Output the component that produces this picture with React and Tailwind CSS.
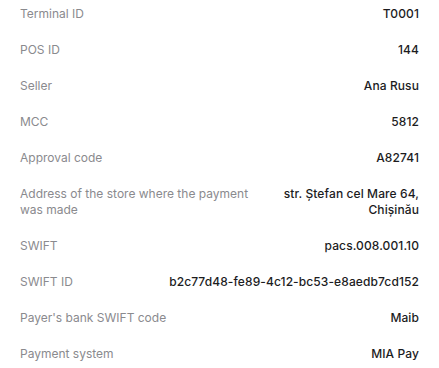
export default function App() {
  const rows = [
    ["Terminal ID", "T0001"],
    ["POS ID", "144"],
    ["Seller", "Ana Rusu"],
    ["MCC", "5812"],
    ["Approval code", "A82741"],
    ["Address of the store where the payment was made", "str. Ștefan cel Mare 64, Chișinău", true],
    ["SWIFT", "pacs.008.001.10"],
    ["SWIFT ID", "b2c77d48-fe89-4c12-bc53-e8aedb7cd152"],
    ["Payer's bank SWIFT code", "Maib"],
    ["Payment system", "MIA Pay"],
  ];
  return (
    <div className="w-[439px] h-[368px] bg-white overflow-hidden px-5 pt-[6px] flex flex-col gap-5 text-[12px] leading-4" style={{ fontFamily: "Inter, 'Noto Sans', sans-serif" }}>
      {rows.map(([l, v, wrap]) => (
        <div key={l} className="flex justify-between items-start gap-6">
          <div className="text-[#8a8a8e] min-w-0 flex-1">{l}</div>
          {wrap ? (
            <div className="text-[#1c1c1e] font-medium tracking-[0.1px] text-right w-[140px] shrink-0">{v}</div>
          ) : (
            <div className="text-[#1c1c1e] font-medium tracking-[0.1px] text-right whitespace-nowrap shrink-0">{v}</div>
          )}
        </div>
      ))}
    </div>
  );
}
